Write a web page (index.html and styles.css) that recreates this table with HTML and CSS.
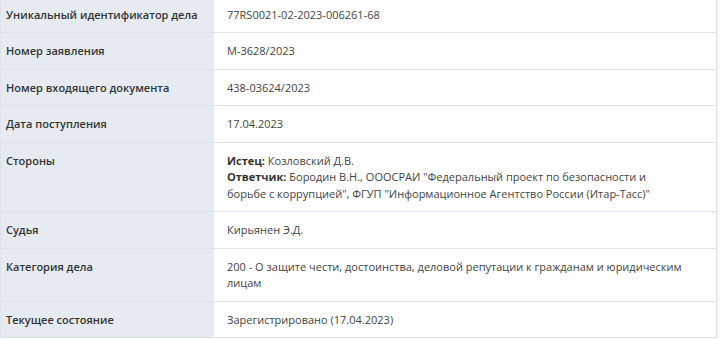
FILE: index.html
```html
<!DOCTYPE html>
<html lang="ru">
<head>
<meta charset="utf-8">
<link rel="stylesheet" href="styles.css">
</head>
<body>
<div class="wrap">
<table class="info">
<tr class="first"><th>Уникальный идентификатор дела</th><td>77RS0021-02-2023-006261-68</td></tr>
<tr><th>Номер заявления</th><td>М-3628/2023</td></tr>
<tr><th>Номер входящего документа</th><td>438-03624/2023</td></tr>
<tr><th>Дата поступления</th><td>17.04.2023</td></tr>
<tr><th>Стороны</th><td><b>Истец:</b> Козловский Д.В.<br><b>Ответчик:</b> Бородин В.Н., ОООСРАИ "Федеральный проект по безопасности и<br>борьбе с коррупцией", ФГУП "Информационное Агентство России (Итар-Тасс)"</td></tr>
<tr><th>Судья</th><td>Кирьянен Э.Д.</td></tr>
<tr><th>Категория дела</th><td>200 - О защите чести, достоинства, деловой репутации к гражданам и юридическим<br>лицам</td></tr>
<tr><th>Текущее состояние</th><td>Зарегистрировано (17.04.2023)</td></tr>
</table>
</div>
</body>
</html>
```

FILE: styles.css
```css
html, body {
  margin: 0;
  padding: 0;
  background: #ffffff;
}
body {
  font-family: "Open Sans", "Noto Sans", sans-serif;
  font-size: 11px;
  line-height: 16.5px;
  color: #444;
}
.wrap {
  margin-top: -4.5px;
  width: 717px;
  box-shadow: 0 2px 3px rgba(0, 0, 0, 0.12);
}
.info {
  width: 717px;
  border-collapse: collapse;
  border: 1px solid #dde3ea;
  table-layout: fixed;
}
.info th, .info td {
  border-bottom: 1px solid #dde3ea;
  padding: 10px 13px 9px;
  vertical-align: top;
  text-align: left;
}
.info th {
  width: 188px;
  padding-left: 5px;
  padding-right: 20px;
  background: #e6ebf1;
  font-weight: 600;
  color: #333;
  white-space: nowrap;
}
.info td {
  background: #fff;
  color: #444;
  white-space: nowrap;
}
.info b {
  font-weight: 700;
  color: #333;
}
```
